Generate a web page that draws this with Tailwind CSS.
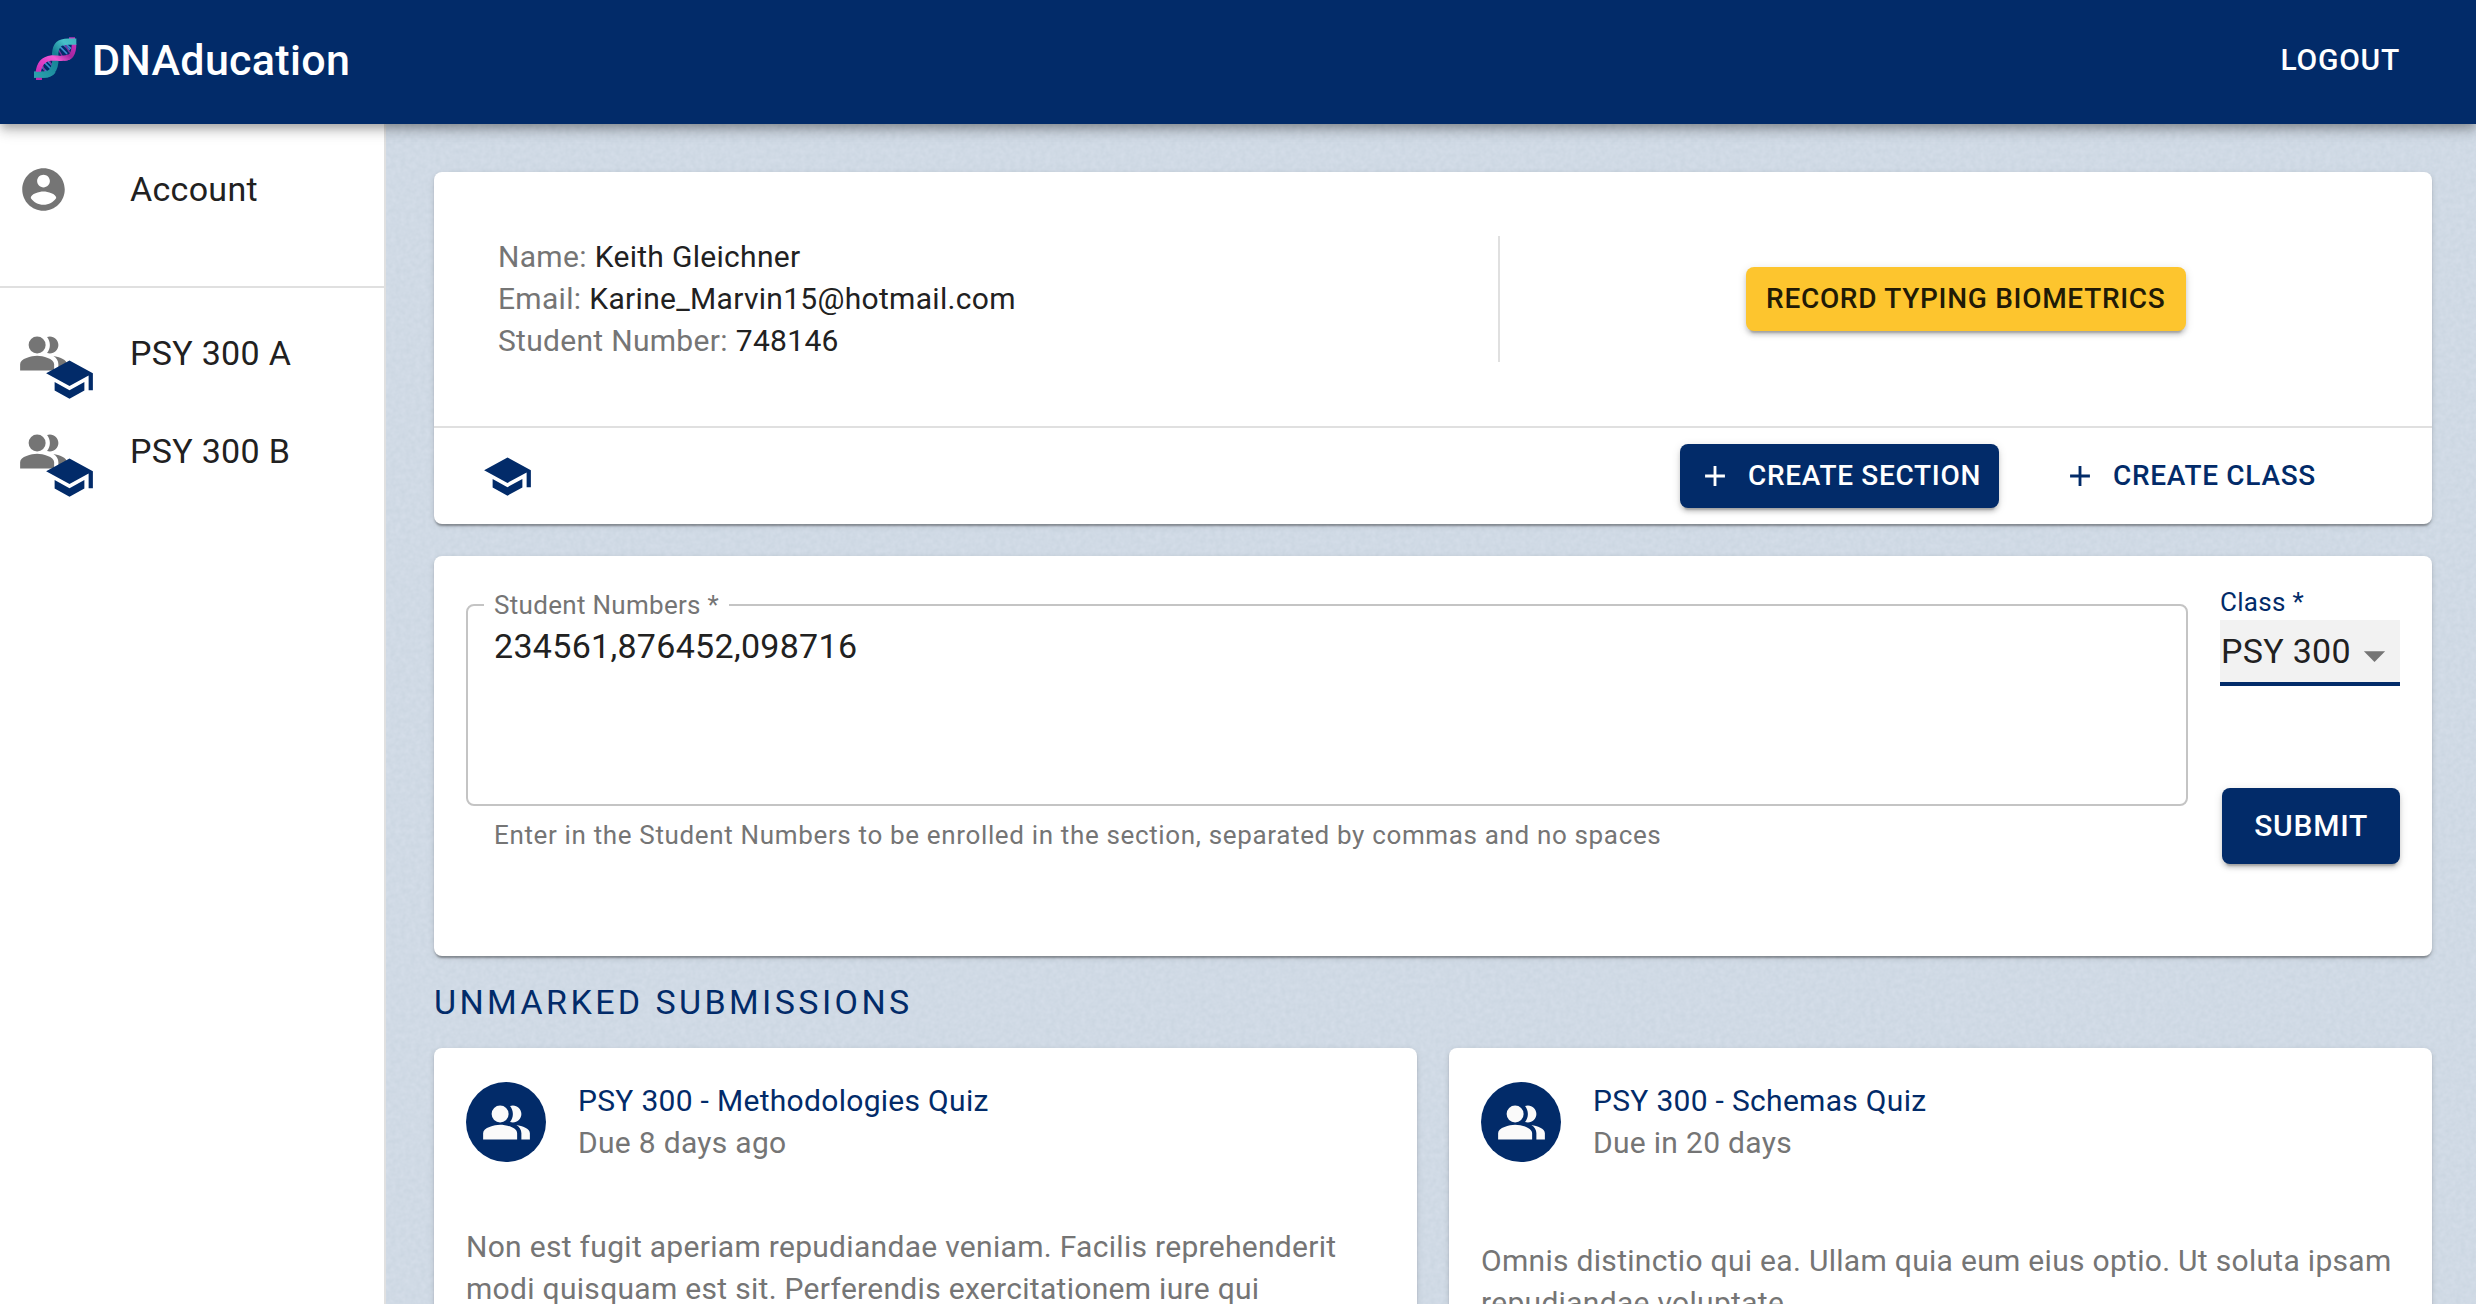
<!DOCTYPE html>
<html lang="en">
<head>
<meta charset="utf-8">
<title>DNAducation</title>
<script src="https://cdn.jsdelivr.net/npm/@tailwindcss/browser@4"></script>
</head>
<body class="flex h-screen flex-col overflow-hidden font-[Roboto,sans-serif] text-[30px] leading-[42px] tracking-[0.01em] text-[#212121]">

<svg class="hidden" aria-hidden="true">
  <symbol id="people" viewBox="0 0 24 24">
    <path d="M16.67 13.13C18.04 14.06 19 15.32 19 17v3h4v-3c0-2.18-3.57-3.47-6.33-3.87z"/>
    <circle cx="9" cy="8" r="4"/>
    <path d="M15 12c2.21 0 4-1.79 4-4s-1.79-4-4-4c-.47 0-.91.1-1.33.24C14.5 5.27 15 6.58 15 8s-.5 2.73-1.33 3.76c.42.14.86.24 1.33.24zM9 13c-2.67 0-8 1.34-8 4v3h16v-3c0-2.66-5.33-4-8-4z"/>
  </symbol>
  <symbol id="school" viewBox="0 0 24 24">
    <path d="M5 13.18v4L12 21l7-3.82v-4L12 17l-7-3.82zM12 3L1 9l11 6 9-4.91V17h2V9L12 3z"/>
  </symbol>
  <symbol id="plus" viewBox="0 0 24 24">
    <path d="M19 13h-6v6h-2v-6H5v-2h6V5h2v6h6v2z"/>
  </symbol>
</svg>

<header class="z-10 flex h-[124px] shrink-0 items-center justify-between bg-[#022b69] pr-[60px] pb-1 pl-[34px] text-white shadow-[0_4px_8px_-2px_rgba(0,0,0,0.2),0_8px_10px_0_rgba(0,0,0,0.14),0_2px_20px_0_rgba(0,0,0,0.12)]">
  <div class="flex items-center gap-[15px]">
    <svg class="mb-1 size-[43px]" viewBox="42 47 130 130" fill="none" aria-hidden="true">
      <defs>
        <linearGradient id="teal" x1="170" y1="55" x2="42" y2="165" gradientUnits="userSpaceOnUse">
          <stop offset="0" stop-color="#3fb4be"/><stop offset=".2" stop-color="#46c0c8"/><stop offset=".45" stop-color="#157f93"/><stop offset=".6" stop-color="#1b8a9c"/><stop offset="1" stop-color="#2ca3ae"/>
        </linearGradient>
        <linearGradient id="pink" x1="160" y1="47" x2="55" y2="177" gradientUnits="userSpaceOnUse">
          <stop offset="0" stop-color="#d633c0"/><stop offset=".3" stop-color="#a3279f"/><stop offset=".5" stop-color="#ef5ad2"/><stop offset=".7" stop-color="#e03fc6"/><stop offset="1" stop-color="#c02aae"/>
        </linearGradient>
      </defs>
      <path d="M118 74l24 24M128 68l22 18M140 70l14 12M62 134l20 20M72 122l24 24M84 120l16 16" stroke="#3d8bd0" stroke-width="5"/>
      <path d="M114 82l14 24M134 68l16 26M66 128l10 26M88 118l12 22" stroke="#7b2f9f" stroke-width="4"/>
      <path d="M157 48v7" stroke="#d633c0" stroke-width="18"/>
      <path d="M163 68c0 28-10 44-30 44" stroke="url(#pink)" stroke-width="14"/>
      <path d="M170 61H146c-28 0-38 10-40 36 4 38-6 64-34 64H42" stroke="url(#teal)" stroke-width="19"/>
      <path d="M150 106c-16 10-34 4-54 4-28 4-38 18-42 48" stroke="url(#pink)" stroke-width="16"/>
      <path d="M57 168v9" stroke="#c02aae" stroke-width="18"/>
      <path d="M42 161H72c12 0 22-4 28-12" stroke="url(#teal)" stroke-width="18"/>
    </svg>
    <h1 class="text-[43px] leading-[56px] font-medium">DNAducation</h1>
  </div>
  <button type="button" class="px-4 py-2 font-medium tracking-wide">LOGOUT</button>
</header>

<div class="flex min-h-0 flex-1">
  <nav class="w-[386px] shrink-0 border-r-2 border-[#e0e0e0] bg-white text-[34px]">
    <div class="border-b-2 border-[#e0e0e0] pt-4 pb-12">
      <a href="#account" class="flex h-[98px] items-center gap-[61px] pl-[18px]">
        <svg class="size-[51px] fill-[#757575]" viewBox="0 0 24 24" aria-hidden="true"><path d="M12 2C6.48 2 2 6.48 2 12s4.480 10 10 10 10-4.480 10-10S17.520 2 12 2zm0 3c1.660 0 3 1.340 3 3s-1.340 3-3 3-3-1.340-3-3 1.340-3 3-3zm0 14.200c-2.500 0-4.710-1.280-6-3.220.03-1.990 4-3.080 6-3.080 1.990 0 5.970 1.090 6 3.080-1.290 1.940-3.500 3.220-6 3.220z"/></svg>
        Account
      </a>
    </div>
    <div class="pt-4">
      <a href="#psy-300-a" class="flex h-[98px] items-center gap-[61px] pl-[18px]">
        <span class="relative size-[51px]">
          <svg class="size-[51px] fill-[#757575]" aria-hidden="true"><use href="#people"/></svg>
          <svg class="absolute top-[26px] left-[26px] size-[51px] fill-[#022b69]" aria-hidden="true"><use href="#school"/></svg>
        </span>
        PSY 300 A
      </a>
      <a href="#psy-300-b" class="flex h-[98px] items-center gap-[61px] pl-[18px]">
        <span class="relative size-[51px]">
          <svg class="size-[51px] fill-[#757575]" aria-hidden="true"><use href="#people"/></svg>
          <svg class="absolute top-[26px] left-[26px] size-[51px] fill-[#022b69]" aria-hidden="true"><use href="#school"/></svg>
        </span>
        PSY 300 B
      </a>
    </div>
  </nav>

  <main class="relative isolate min-w-0 flex-1 overflow-hidden bg-[#d0dae5] pt-12 pr-11 pl-12">
    <!-- paper-like grain behind the cards -->
    <svg class="absolute inset-0 -z-10 size-full" aria-hidden="true">
      <filter id="grain" x="0" y="0" width="100%" height="100%" color-interpolation-filters="sRGB">
        <feTurbulence type="fractalNoise" baseFrequency="0.2" numOctaves="2" seed="4"/>
        <feColorMatrix values="0.05 0 0 0 0.79  0.04 0 0 0 0.834  0.04 0 0 0 0.878  0 0 0 0 1"/>
      </filter>
      <rect width="100%" height="100%" filter="url(#grain)"/>
    </svg>

    <section class="rounded-lg bg-white shadow-[0_4px_2px_-2px_rgba(0,0,0,0.2),0_2px_2px_0_rgba(0,0,0,0.14),0_2px_6px_0_rgba(0,0,0,0.12)]">
      <div class="grid grid-cols-[8fr_7fr] py-16">
        <dl class="border-r-2 border-[#e0e0e0] pl-16">
          <div class="flex gap-2"><dt class="text-[#757575]">Name:</dt><dd>Keith Gleichner</dd></div>
          <div class="flex gap-2"><dt class="text-[#757575]">Email:</dt><dd>Karine_Marvin15@hotmail.com</dd></div>
          <div class="flex gap-2"><dt class="text-[#757575]">Student Number:</dt><dd>748146</dd></div>
        </dl>
        <div class="flex items-center justify-center">
          <button type="button" class="h-16 rounded-lg bg-[#fdc52e] px-5 text-[28px] font-medium tracking-wide text-[#211a06] shadow-[0_6px_2px_-4px_rgba(0,0,0,0.2),0_4px_4px_0_rgba(0,0,0,0.14),0_2px_10px_0_rgba(0,0,0,0.12)]">RECORD TYPING BIOMETRICS</button>
        </div>
      </div>
      <div class="flex h-[98px] items-center border-t-2 border-[#e0e0e0] pr-[98px] pl-12">
        <svg class="size-[51px] fill-[#022b69]" aria-hidden="true"><use href="#school"/></svg>
        <button type="button" class="ml-auto flex h-16 items-center gap-4 rounded-lg bg-[#022b69] px-[18px] text-[28px] font-medium tracking-wide text-white shadow-[0_6px_2px_-4px_rgba(0,0,0,0.2),0_4px_4px_0_rgba(0,0,0,0.14),0_2px_10px_0_rgba(0,0,0,0.12)]">
          <svg class="size-[34px] fill-white" aria-hidden="true"><use href="#plus"/></svg>CREATE SECTION
        </button>
        <button type="button" class="ml-[46px] flex h-16 items-center gap-4 rounded-lg px-[18px] text-[28px] font-medium tracking-wide text-[#022b69]">
          <svg class="size-[34px] fill-[#022b69]" aria-hidden="true"><use href="#plus"/></svg>CREATE CLASS
        </button>
      </div>
    </section>

    <form class="mt-8 flex min-h-[400px] gap-8 rounded-lg bg-white px-8 pt-8 shadow-[0_4px_2px_-2px_rgba(0,0,0,0.2),0_2px_2px_0_rgba(0,0,0,0.14),0_2px_6px_0_rgba(0,0,0,0.12)]">
      <div class="min-w-0 flex-1">
        <fieldset class="rounded-lg border-2 border-[#c4c4c4] px-4 pb-[18px]">
          <legend class="px-[10px] text-[26px] leading-[34px] text-[#757575]"><label for="numbers">Student Numbers *</label></legend>
          <textarea id="numbers" rows="4" class="mt-1 block w-full resize-none px-[10px] text-[34px] leading-[40px] outline-none">234561,876452,098716</textarea>
        </fieldset>
        <p class="mt-2 px-7 text-[26px] tracking-wide text-[#757575]">Enter in the Student Numbers to be enrolled in the section, separated by commas and no spaces</p>
      </div>
      <div class="flex w-[180px] flex-col">
        <label for="class" class="text-[26px] leading-7 text-[#022b69]">Class *</label>
        <div class="relative mt-1">
          <select id="class" class="block h-[66px] w-full appearance-none border-b-4 border-[#022b69] bg-[#f2f2f2] pl-px text-[34px] outline-none"><option>PSY 300</option></select>
          <svg class="pointer-events-none absolute top-[10px] right-0 size-[51px] fill-[#757575]" viewBox="0 0 24 24" aria-hidden="true"><path d="M7 10l5 5 5-5z"/></svg>
        </div>
        <button type="submit" class="mt-[102px] h-[76px] self-end rounded-lg bg-[#022b69] px-8 font-medium tracking-wide text-white shadow-[0_6px_2px_-4px_rgba(0,0,0,0.2),0_4px_4px_0_rgba(0,0,0,0.14),0_2px_10px_0_rgba(0,0,0,0.12)]">SUBMIT</button>
      </div>
    </form>

    <h2 class="py-[18px] text-[34px] leading-[56px] tracking-widest text-[#022b69]">UNMARKED SUBMISSIONS</h2>

    <div class="grid grid-cols-2 gap-8">
      <article class="rounded-lg bg-white p-8 shadow-[0_4px_2px_-2px_rgba(0,0,0,0.2),0_2px_2px_0_rgba(0,0,0,0.14),0_2px_6px_0_rgba(0,0,0,0.12)]">
        <div class="flex items-center gap-8">
          <span class="flex size-20 items-center justify-center rounded-full bg-[#022b69]"><svg class="size-[51px] fill-[#fafafa]" aria-hidden="true"><use href="#people"/></svg></span>
          <div>
            <h3><a href="#methodologies-quiz" class="text-[#022b69]">PSY 300 - Methodologies Quiz</a></h3>
            <p class="text-[#757575]">Due 8 days ago</p>
          </div>
        </div>
        <p class="mt-[62px] text-[#757575]">Non est fugit aperiam repudiandae veniam. Facilis reprehenderit modi quisquam est sit. Perferendis exercitationem iure qui</p>
      </article>
      <article class="rounded-lg bg-white p-8 shadow-[0_4px_2px_-2px_rgba(0,0,0,0.2),0_2px_2px_0_rgba(0,0,0,0.14),0_2px_6px_0_rgba(0,0,0,0.12)]">
        <div class="flex items-center gap-8">
          <span class="flex size-20 items-center justify-center rounded-full bg-[#022b69]"><svg class="size-[51px] fill-[#fafafa]" aria-hidden="true"><use href="#people"/></svg></span>
          <div>
            <h3><a href="#schemas-quiz" class="text-[#022b69]">PSY 300 - Schemas Quiz</a></h3>
            <p class="text-[#757575]">Due in 20 days</p>
          </div>
        </div>
        <p class="mt-[76px] text-[#757575]">Omnis distinctio qui ea. Ullam quia eum eius optio. Ut soluta ipsam repudiandae voluptate.</p>
      </article>
    </div>
  </main>
</div>
</body>
</html>
